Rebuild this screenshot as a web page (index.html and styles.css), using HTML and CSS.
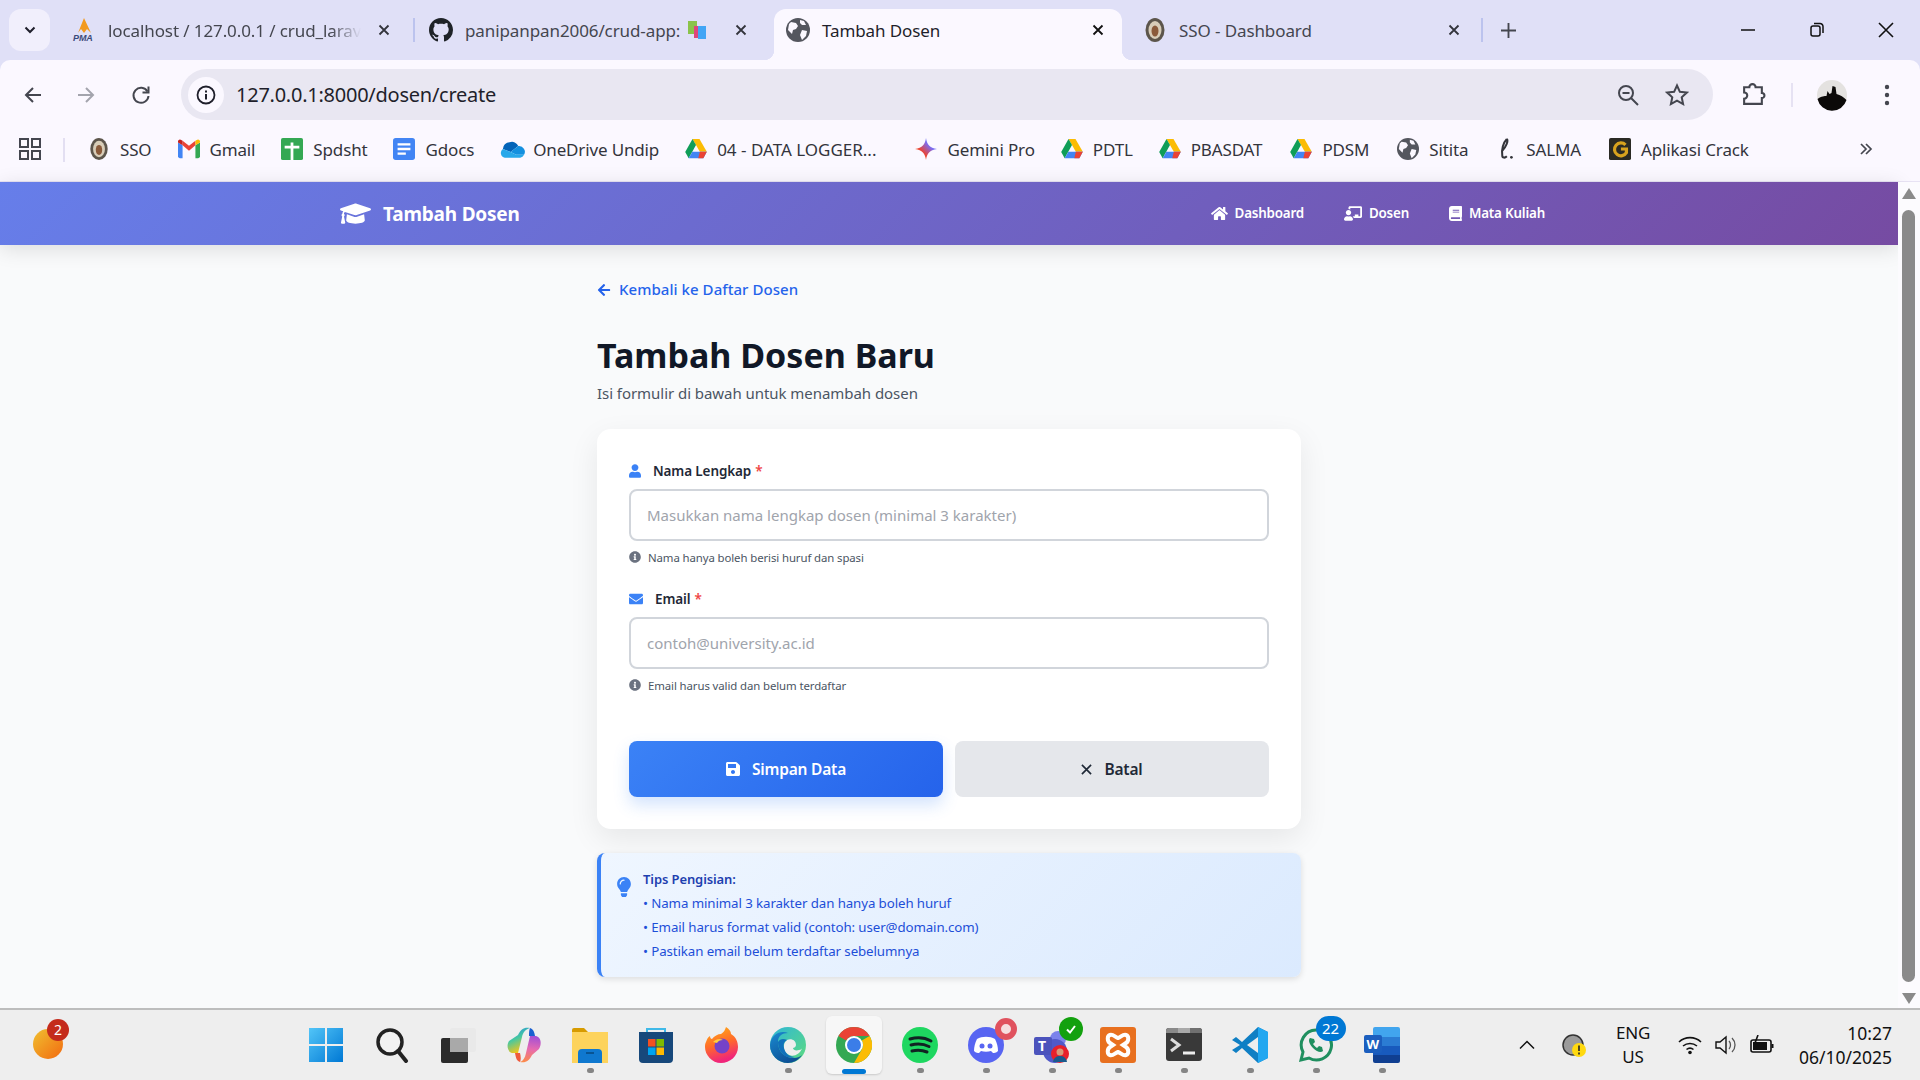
FILE: index.html
```html
<!DOCTYPE html>
<html lang="en">
<head>
    <meta charset="UTF-8">
    <meta name="viewport" content="width=device-width, initial-scale=1.0">
    <title>Tambah Dosen</title>
    <link rel="stylesheet" href="styles.css">
</head>
<body>
    <svg class="defs" width="0" height="0">
        <symbol id="drive" viewBox="0 0 24 22">
            <path d="M8.2 0h7.6l8 14h-7.6z" fill="#fbbc04"/>
            <path d="M8.2 0l3.8 6.7L4 21 .2 14.3z" fill="#0f9d58"/>
            <path d="M8 14h15.8L20 21H4z" fill="#4285f4"/>
            <path d="M16.2 14h7.6L20 21h-5.5z" fill="#ea4335"/>
        </symbol>
        <symbol id="globe" viewBox="0 0 24 24">
            <circle cx="12" cy="12" r="12" fill="#54565e"/>
            <path d="M5 4l5 1 2 3-2 3-3 1-1 4-4-4 1-6zM16 12l5 1-1 5-4 4-2-5zM14 2l4 1 2 4-4 0-2-2z" fill="#fbf8ff"/>
        </symbol>
        <symbol id="seal" viewBox="0 0 24 24">
            <ellipse cx="12" cy="12" rx="9.5" ry="12" fill="#5c554b"/>
            <ellipse cx="12" cy="12" rx="6.5" ry="9" fill="#d8cdb8"/>
            <ellipse cx="12" cy="13" rx="3.5" ry="5.5" fill="#8a5a3a"/>
        </symbol>
        <symbol id="info" viewBox="0 0 512 512">
            <path fill="currentColor" d="M256 8C119.043 8 8 119.083 8 256c0 136.997 111.043 248 248 248s248-111.003 248-248C504 119.083 392.957 8 256 8zm0 110c23.196 0 42 18.804 42 42s-18.804 42-42 42-42-18.804-42-42 18.804-42 42-42zm56 254c0 6.627-5.373 12-12 12h-88c-6.627 0-12-5.373-12-12v-24c0-6.627 5.373-12 12-12h12v-64h-12c-6.627 0-12-5.373-12-12v-24c0-6.627 5.373-12 12-12h64c6.627 0 12 5.373 12 12v100h12c6.627 0 12 5.373 12 12v24z"/>
        </symbol>
        <symbol id="tabx" viewBox="0 0 12 12">
            <path d="M1.5 1.5l9 9M10.5 1.5l-9 9" stroke="currentColor" stroke-width="1.8" fill="none"/>
        </symbol>
    </svg>

    <div class="tabstrip">
        <button class="tab-search">
            <svg width="12" height="8" viewBox="0 0 12 8"><path d="M1.5 1.5L6 6l4.500-4.500" stroke="#1f1f2b" stroke-width="2" fill="none"/></svg>
        </button>
        <div class="tab">
            <svg class="fav" viewBox="0 0 24 24">
                <path d="M6 15L12 0l7 15-4-4-3 4-3-4z" fill="#f29a1f"/>
                <text x="1" y="23" class="pma">PMA</text>
            </svg>
            <span class="tab-title fade">localhost / 127.0.0.1 / crud_larav</span>
            <svg class="tab-close"><use href="#tabx"/></svg>
        </div>
        <div class="tab-sep"></div>
        <div class="tab">
            <svg class="fav" viewBox="0 0 16 16"><path fill="#1f2328" d="M8 0C3.58 0 0 3.58 0 8c0 3.54 2.29 6.53 5.47 7.59.4.07.55-.17.55-.38 0-.19-.01-.82-.01-1.49-2.01.37-2.53-.49-2.69-.94-.09-.23-.48-.94-.82-1.13-.28-.15-.68-.52-.01-.53.63-.01 1.08.58 1.23.82.72 1.21 1.87.87 2.33.66.07-.52.28-.87.51-1.07-1.78-.2-3.64-.89-3.64-3.95 0-.87.31-1.59.82-2.15-.08-.2-.36-1.02.08-2.12 0 0 .67-.21 2.2.82.64-.18 1.32-.27 2-.27s1.36.09 2 .27c1.53-1.04 2.2-.82 2.2-.82.44 1.1.16 1.92.08 2.12.51.56.82 1.27.82 2.15 0 3.07-1.87 3.75-3.65 3.95.29.25.54.73.54 1.48 0 1.07-.01 1.93-.01 2.2 0 .21.15.46.55.38A8.01 8.01 0 0 0 16 8c0-4.42-3.58-8-8-8z"/></svg>
            <span class="tab-title">panipanpan2006/crud-app:</span>
            <svg class="tab-emoji" viewBox="0 0 18 20">
                <rect x="0" y="1" width="9" height="13" fill="#8bc34a"/>
                <rect x="6" y="6" width="5" height="12" fill="#e0457b"/>
                <rect x="10" y="6" width="8" height="13" fill="#42a5f5"/>
            </svg>
            <svg class="tab-close"><use href="#tabx"/></svg>
        </div>
        <div class="tab active">
            <svg class="fav"><use href="#globe"/></svg>
            <span class="tab-title">Tambah Dosen</span>
            <svg class="tab-close"><use href="#tabx"/></svg>
        </div>
        <div class="tab tab-last">
            <svg class="fav"><use href="#seal"/></svg>
            <span class="tab-title">SSO - Dashboard</span>
            <svg class="tab-close"><use href="#tabx"/></svg>
        </div>
        <div class="tab-sep"></div>
        <svg class="new-tab" viewBox="0 0 16 16"><path d="M8 0v16M0 8h16" stroke="#44464f" stroke-width="2"/></svg>
        <div class="win-controls">
            <svg viewBox="0 0 16 16"><path d="M1 8h14" stroke="#111" stroke-width="1.5"/></svg>
            <svg viewBox="0 0 16 16"><rect x="2" y="4" width="9" height="10" rx="2" fill="none" stroke="#111" stroke-width="1.5"/><path d="M5 1.5h6a3 3 0 0 1 3 3V11" fill="none" stroke="#111" stroke-width="1.5"/></svg>
            <svg viewBox="0 0 16 16"><path d="M1 1l14 14M15 1L1 15" stroke="#111" stroke-width="1.6"/></svg>
        </div>
    </div>

    <div class="toolbar">
        <div class="nav-btns">
            <svg viewBox="0 0 20 20"><path d="M18 10H3M10 3l-7 7 7 7" fill="none" stroke="#44464f" stroke-width="2"/></svg>
            <svg viewBox="0 0 20 20"><path d="M2 10h15M10 3l7 7-7 7" fill="none" stroke="#a3a4ad" stroke-width="2"/></svg>
            <svg class="reload" viewBox="0 0 20 20"><path d="M16.5 6.5A7.5 7.5 0 1 0 17.5 11" fill="none" stroke="#44464f" stroke-width="2"/><path d="M17.5 1.5v6h-6" fill="none" stroke="#44464f" stroke-width="2"/></svg>
        </div>
        <div class="omnibox">
            <span class="site-info">
                <svg width="20" height="20" viewBox="0 0 20 20"><circle cx="10" cy="10" r="8.5" fill="none" stroke="#1f1f2b" stroke-width="1.8"/><path d="M10 9v5.500M10 5.500v2" stroke="#1f1f2b" stroke-width="2"/></svg>
            </span>
            <span class="url">127.0.0.1:8000/dosen/create</span>
            <svg class="omni-icon" viewBox="0 0 24 24"><circle cx="10" cy="10" r="7" fill="none" stroke="#44464f" stroke-width="2"/><path d="M15 15l7 7M6.500 10h7" stroke="#44464f" stroke-width="2"/></svg>
            <svg class="omni-icon star" viewBox="0 0 24 24"><path d="M12 2.500l2.900 6.300 6.900.8-5.100 4.700 1.400 6.800-6.100-3.400-6.100 3.400 1.400-6.800L2.200 9.600l6.900-.8z" fill="none" stroke="#44464f" stroke-width="2"/></svg>
        </div>
        <svg class="ext" viewBox="0 0 24 24"><path d="M3 5h5a3 3 0 0 1 6 0h6v5.500a2.500 2.500 0 0 1 0 5V21H3v-5a3 3 0 0 0 0-6z" fill="none" stroke="#44464f" stroke-width="2"/></svg>
        <div class="tool-sep"></div>
        <svg class="avatar" viewBox="0 0 32 32">
            <circle cx="16" cy="16" r="15" fill="#e4e2e0"/>
            <path d="M1.500 20c4-3 7-3 9-3l1-5 2 3 2-1 1-7 3 1 1 7c4 1 7 3 10 6a15 15 0 0 1-29-1z" fill="#0b0908"/>
        </svg>
        <svg class="kebab" viewBox="0 0 6 24"><circle cx="3" cy="4" r="2.200" fill="#44464f"/><circle cx="3" cy="12" r="2.200" fill="#44464f"/><circle cx="3" cy="20" r="2.200" fill="#44464f"/></svg>
    </div>

    <div class="bookmarks">
        <svg class="apps" viewBox="0 0 22 22"><g fill="none" stroke="#44464f" stroke-width="2"><rect x="1" y="1" width="8" height="8"/><rect x="13" y="1" width="8" height="8"/><rect x="1" y="13" width="8" height="8"/><rect x="13" y="13" width="8" height="8"/></g></svg>
        <div class="bm-sep"></div>
        <div class="bm">
            <svg class="bm-icon"><use href="#seal"/></svg>SSO
        </div>
        <div class="bm">
            <svg class="bm-icon" viewBox="0 0 24 20"><path d="M0 3l5 3v14H2a2 2 0 0 1-2-2z" fill="#4285f4"/><path d="M24 3l-5 3v14h3a2 2 0 0 0 2-2z" fill="#34a853"/><path d="M5 6l7 6 7-6V1l-7 5.500L5 1z" fill="#ea4335"/><path d="M0 3l5 3V1L3 0a2 2 0 0 0-3 2z" fill="#c5221f"/><path d="M24 3l-5 3V1l2-1a2 2 0 0 1 3 2z" fill="#fbbc04"/></svg>Gmail
        </div>
        <div class="bm">
            <svg class="bm-icon" viewBox="0 0 24 24"><rect width="24" height="24" rx="2" fill="#34a853"/><path d="M12 5v19M4 10h16" stroke="#fff" stroke-width="3"/></svg>Spdsht
        </div>
        <div class="bm">
            <svg class="bm-icon" viewBox="0 0 24 24"><rect x="0" width="24" height="24" rx="3" fill="#4285f4"/><path d="M5 7h14M5 12h14M5 17h9" stroke="#fff" stroke-width="2.500"/></svg>Gdocs
        </div>
        <div class="bm">
            <svg class="bm-icon wide" viewBox="0 0 26 18"><path d="M10 2a7 7 0 0 1 9 4l-8 6-8-3a7 7 0 0 1 7-7z" fill="#0364b8"/><path d="M19 6a6 6 0 0 1 6 9l-8 0-6-3z" fill="#1490df"/><path d="M3 9l8 3 6 3 8 0a5 5 0 0 1-4 3H5a5 5 0 0 1-2-9z" fill="#28a8ea"/></svg>OneDrive Undip
        </div>
        <div class="bm bm-data">
            <svg class="bm-icon"><use href="#drive"/></svg>04 - DATA LOGGER...
        </div>
        <div class="bm">
            <svg class="bm-icon" viewBox="0 0 24 24">
                <defs><linearGradient id="gem" x1="0" y1="1" x2="1" y2="0"><stop offset="0" stop-color="#f9a825"/><stop offset=".35" stop-color="#ea4335"/><stop offset=".65" stop-color="#7c6cf0"/><stop offset="1" stop-color="#4285f4"/></linearGradient></defs>
                <path d="M12 0c1 7 4 11 12 12-8 1-11 5-12 12-1-7-4-11-12-12 8-1 11-5 12-12z" fill="url(#gem)"/>
            </svg>Gemini Pro
        </div>
        <div class="bm">
            <svg class="bm-icon"><use href="#drive"/></svg>PDTL
        </div>
        <div class="bm bm-gap">
            <svg class="bm-icon"><use href="#drive"/></svg>PBASDAT
        </div>
        <div class="bm bm-gap">
            <svg class="bm-icon"><use href="#drive"/></svg>PDSM
        </div>
        <div class="bm">
            <svg class="bm-icon"><use href="#globe"/></svg>Sitita
        </div>
        <div class="bm bm-gap">
            <svg class="bm-icon" viewBox="0 0 24 24"><path d="M14 1c-4 4-6 12-5 18 0 3 3 3 5 1M14 1c2 2-1 9-5 13" fill="none" stroke="#33343a" stroke-width="2.200"/><circle cx="19" cy="21" r="1.500" fill="#33343a"/></svg>SALMA
        </div>
        <div class="bm">
            <svg class="bm-icon" viewBox="0 0 24 24"><rect width="24" height="24" rx="2" fill="#2a2a24"/><path d="M18 7.500A7 7 0 1 0 19 16v-4h-6" fill="none" stroke="#d7a21e" stroke-width="3.500"/></svg>Aplikasi Crack
        </div>
        <svg class="bm-more" viewBox="0 0 14 14"><path d="M2 2l5 5-5 5M7 2l5 5-5 5" fill="none" stroke="#44464f" stroke-width="1.700"/></svg>
    </div>

    <div class="viewport">
        <div class="page">
            <nav class="topnav">
                <div class="topnav-inner">
                    <div class="brand">
                        <svg class="brand-icon" viewBox="0 55 640 400" preserveAspectRatio="none"><path fill="currentColor" d="M622.34 153.2L343.4 67.5c-15.2-4.67-31.6-4.67-46.79 0L17.66 153.2c-23.54 7.23-23.54 38.36 0 45.59l48.63 14.94c-10.67 13.19-17.23 29.28-17.88 46.9C38.78 266.15 32 276.11 32 288c0 10.78 5.68 19.85 13.86 25.65L20.33 428.53C18.11 438.52 25.71 448 35.94 448h56.11c10.24 0 17.84-9.48 15.62-19.47L82.14 313.65C90.32 307.85 96 298.78 96 288c0-11.57-6.47-21.25-15.66-26.87.76-15.02 8.44-28.3 20.69-36.72L296.6 284.5c9.06 2.78 26.44 6.25 46.79 0l278.95-85.7c23.55-7.24 23.55-38.36 0-45.6zM352.79 315.09c-28.53 8.76-52.84 3.92-65.59 0l-145.02-44.55L128 384c0 35.35 85.96 64 192 64s192-28.65 192-64l-14.18-113.47-145.03 44.56z"/></svg>
                        <span>Tambah Dosen</span>
                    </div>
                    <div class="nav-links">
                        <a class="nav-link">
                            <svg viewBox="0 0 576 512" width="17" height="15"><path fill="currentColor" d="M280.37 148.26L96 300.11V464a16 16 0 0 0 16 16l112.06-.29a16 16 0 0 0 15.92-16V368a16 16 0 0 1 16-16h64a16 16 0 0 1 16 16v95.64a16 16 0 0 0 16 16.05L464 480a16 16 0 0 0 16-16V300L295.67 148.26a12.19 12.19 0 0 0-15.3 0zM571.6 251.47L488 182.56V44.05a12 12 0 0 0-12-12h-56a12 12 0 0 0-12 12v72.61L318.47 43a48 48 0 0 0-61 0L4.34 251.47a12 12 0 0 0-1.6 16.9l25.5 31A12 12 0 0 0 45.15 301l235.22-193.74a12.19 12.19 0 0 1 15.3 0L530.9 301a12 12 0 0 0 16.9-1.6l25.5-31a12 12 0 0 0-1.7-16.93z"/></svg>
                            <span>Dashboard</span>
                        </a>
                        <a class="nav-link">
                            <svg viewBox="0 0 640 512" width="18" height="15"><path fill="currentColor" d="M208 352c-2.39 0-4.78.35-7.06 1.09C187.98 357.3 174.35 360 160 360c-14.35 0-27.98-2.7-40.95-6.91-2.28-.74-4.66-1.09-7.05-1.09C49.94 352-.33 402.48 0 464.62.14 490.88 21.73 512 48 512h224c26.27 0 47.86-21.12 48-47.38.33-62.14-49.94-112.62-112-112.62zm-48-32c53.02 0 96-42.98 96-96s-42.98-96-96-96-96 42.98-96 96 42.98 96 96 96zM592 0H208c-26.47 0-48 22.25-48 49.59V96c23.42 0 45.1 6.78 64 17.8V64h352v288h-64v-64H384v64h-76.24c19.1 16.69 33.12 38.73 39.69 64H592c26.47 0 48-22.25 48-49.59V49.59C640 22.25 618.47 0 592 0z"/></svg>
                            <span>Dosen</span>
                        </a>
                        <a class="nav-link">
                            <svg viewBox="0 0 448 512" width="13" height="15"><path fill="currentColor" d="M448 360V24c0-13.3-10.7-24-24-24H96C43 0 0 43 0 96v320c0 53 43 96 96 96h328c13.3 0 24-10.7 24-24v-16c0-7.5-3.5-14.3-8.9-18.7-4.2-15.4-4.2-59.3 0-74.7 5.4-4.3 8.9-11.1 8.9-18.6zM128 134c0-3.3 2.7-6 6-6h212c3.3 0 6 2.7 6 6v20c0 3.3-2.7 6-6 6H134c-3.3 0-6-2.7-6-6v-20zm0 64c0-3.3 2.7-6 6-6h212c3.3 0 6 2.7 6 6v20c0 3.3-2.7 6-6 6H134c-3.3 0-6-2.7-6-6v-20zm253.4 250H96c-17.7 0-32-14.3-32-32 0-17.6 14.4-32 32-32h285.4c-1.9 17.1-1.9 46.9 0 64z"/></svg>
                            <span>Mata Kuliah</span>
                        </a>
                    </div>
                </div>
            </nav>

            <main class="content">
                <a class="back-link">
                    <svg viewBox="0 0 448 512" width="14" height="14"><path fill="currentColor" d="M257.5 445.1l-22.2 22.2c-9.4 9.4-24.6 9.4-33.9 0L7 273c-9.4-9.4-9.4-24.6 0-33.9L201.4 44.7c9.4-9.4 24.6-9.4 33.9 0l22.2 22.2c9.5 9.5 9.3 25-.4 34.3L136.6 216H424c13.3 0 24 10.7 24 24v32c0 13.3-10.7 24-24 24H136.6l120.5 114.8c9.8 9.3 10 24.8.4 34.3z"/></svg>
                    <span>Kembali ke Daftar Dosen</span>
                </a>
                <h1 class="page-title">Tambah Dosen Baru</h1>
                <p class="page-sub">Isi formulir di bawah untuk menambah dosen</p>

                <form class="card">
                    <div class="field">
                        <label class="field-label">
                            <svg viewBox="0 0 448 512" width="12" height="14"><path fill="currentColor" d="M224 256c70.7 0 128-57.3 128-128S294.7 0 224 0 96 57.3 96 128s57.3 128 128 128zm89.6 32h-16.7c-22.2 10.2-46.9 16-72.9 16s-50.6-5.8-72.9-16h-16.7C60.2 288 0 348.2 0 422.4V464c0 26.5 21.5 48 48 48h352c26.5 0 48-21.5 48-48v-41.6c0-74.2-60.2-134.4-134.4-134.4z"/></svg>
                            Nama Lengkap <span class="req">*</span>
                        </label>
                        <input class="text-input" type="text" placeholder="Masukkan nama lengkap dosen (minimal 3 karakter)">
                        <p class="hint"><svg width="12" height="12"><use href="#info"/></svg>Nama hanya boleh berisi huruf dan spasi</p>
                    </div>
                    <div class="field">
                        <label class="field-label">
                            <svg viewBox="0 0 512 512" width="14" height="14"><path fill="currentColor" d="M502.3 190.8c3.9-3.1 9.7-.2 9.7 4.7V400c0 26.5-21.5 48-48 48H48c-26.5 0-48-21.5-48-48V195.6c0-5 5.7-7.8 9.7-4.7 22.4 17.4 52.1 39.5 154.1 113.6 21.1 15.4 56.7 47.8 92.2 47.6 35.7.3 72-32.8 92.3-47.6 102-74.1 131.6-96.3 154-113.7zM256 320c23.2.4 56.6-29.2 73.4-41.4 132.7-96.3 142.8-104.7 173.4-128.7 5.8-4.5 9.2-11.5 9.2-18.9v-19c0-26.5-21.5-48-48-48H48C21.5 64 0 85.5 0 112v19c0 7.4 3.4 14.3 9.2 18.9 30.6 23.9 40.7 32.4 173.4 128.7 16.8 12.2 50.2 41.8 73.4 41.4z"/></svg>
                            Email <span class="req">*</span>
                        </label>
                        <input class="text-input" type="text" placeholder="contoh@university.ac.id">
                        <p class="hint"><svg width="12" height="12"><use href="#info"/></svg>Email harus valid dan belum terdaftar</p>
                    </div>
                    <div class="actions">
                        <button type="button" class="btn btn-primary">
                            <svg viewBox="0 0 448 512" width="14" height="16"><path fill="currentColor" d="M433.941 129.941l-83.882-83.882A48 48 0 0 0 316.118 32H48C21.49 32 0 53.49 0 80v352c0 26.51 21.49 48 48 48h352c26.51 0 48-21.49 48-48V163.882a48 48 0 0 0-14.059-33.941zM224 416c-35.346 0-64-28.654-64-64 0-35.346 28.654-64 64-64s64 28.654 64 64c0 35.346-28.654 64-64 64zm96-304.52V212c0 6.627-5.373 12-12 12H76c-6.627 0-12-5.373-12-12V108c0-6.627 5.373-12 12-12h228.52c3.183 0 6.235 1.264 8.485 3.515l3.48 3.48A11.996 11.996 0 0 1 320 111.48z"/></svg>
                            Simpan Data
                        </button>
                        <button type="button" class="btn btn-cancel">
                            <svg viewBox="0 0 12 12" width="11" height="11"><path d="M1 1l10 10M11 1L1 11" stroke="currentColor" stroke-width="1.8" fill="none"/></svg>
                            Batal
                        </button>
                    </div>
                </form>

                <div class="tips">
                    <svg class="tips-icon" viewBox="0 0 352 512"><path fill="currentColor" d="M96.06 454.35c.01 6.29 1.87 12.45 5.36 17.69l17.09 25.69a31.99 31.99 0 0 0 26.64 14.28h61.71a31.99 31.99 0 0 0 26.64-14.28l17.09-25.69a31.989 31.989 0 0 0 5.36-17.69l.04-38.35H96.01l.05 38.35zM0 176c0 44.37 16.45 84.85 43.56 115.78 16.52 18.85 42.36 58.23 52.21 91.45.04.26.07.52.11.78h160.24c.04-.26.07-.51.11-.78 9.85-33.22 35.69-72.6 52.21-91.45C335.55 260.85 352 220.37 352 176 352 78.61 272.91-.3 175.45 0 73.44.31 0 82.97 0 176zm176-80c-44.11 0-80 35.89-80 80 0 8.84-7.16 16-16 16s-16-7.16-16-16c0-61.76 50.24-112 112-112 8.84 0 16 7.16 16 16s-7.16 16-16 16z"/></svg>
                    <div class="tips-text">
                        <p class="tips-title">Tips Pengisian:</p>
                        <p>• Nama minimal 3 karakter dan hanya boleh huruf</p>
                        <p>• Email harus format valid (contoh: user@domain.com)</p>
                        <p>• Pastikan email belum terdaftar sebelumnya</p>
                    </div>
                </div>
            </main>
        </div>
        <div class="scrollbar">
            <div class="sb-arrow up"></div>
            <div class="sb-thumb"></div>
            <div class="sb-arrow down"></div>
        </div>
    </div>

    <footer class="taskbar">
        <div class="tb-left">
            <div class="widget">
                <span class="widget-badge">2</span>
            </div>
        </div>
        <div class="tb-apps">
            <div class="app">
                <svg viewBox="0 0 36 36">
                    <defs><linearGradient id="win" x1="0" y1="0" x2="1" y2="1"><stop offset="0" stop-color="#52c5f8"/><stop offset="1" stop-color="#0078d4"/></linearGradient></defs>
                    <path d="M1 1h16v16H1zM19 1h16v16H19zM1 19h16v16H1zM19 19h16v16H19z" fill="url(#win)"/>
                </svg>
            </div>
            <div class="app">
                <svg viewBox="0 0 36 36"><circle cx="16" cy="15" r="12" fill="#f2f2f2" stroke="#222" stroke-width="3.5"/><path d="M24 24l8 10" stroke="#222" stroke-width="4" stroke-linecap="round"/></svg>
            </div>
            <div class="app">
                <svg viewBox="0 0 36 36"><rect x="1" y="11" width="27" height="25" rx="2" fill="#2b2b2b"/><rect x="10" y="1" width="26" height="24" rx="2" fill="#e9e9e9"/><rect x="10" y="11" width="18" height="14" fill="#a9a9a9"/></svg>
            </div>
            <div class="app">
                <svg viewBox="0 0 36 36">
                    <defs>
                        <linearGradient id="cop1" x1="0" y1="0" x2=".4" y2="1"><stop offset="0" stop-color="#1b87e8"/><stop offset=".5" stop-color="#47c8a0"/><stop offset="1" stop-color="#f5c518"/></linearGradient>
                        <linearGradient id="cop2" x1=".6" y1="0" x2=".5" y2="1"><stop offset="0" stop-color="#a24fd6"/><stop offset=".5" stop-color="#e66ab0"/><stop offset="1" stop-color="#fb8a4c"/></linearGradient>
                    </defs>
                    <path d="M24 1c-6-1-9 1-12 7L3 14c-3 5-1 11 3 12h6l4-16c1-5 4-8 8-9z" fill="url(#cop1)"/>
                    <path d="M14 35c6 1 9-1 12-7l7-6c3-5 2-12-3-13h-6l-4 17c-1 5-3 8-6 9z" fill="url(#cop2)"/>
                    <path d="M24 1c3 1 4 3 5 8h-6c0-3 0-6 1-8z" fill="#1a5fd0"/>
                    <path d="M14 35c-3-1-4-3-5-9h5c1 4 1 7 0 9z" fill="#ef5a3c"/>
                </svg>
            </div>
            <div class="app running">
                <svg viewBox="0 0 36 36">
                    <path d="M0 3a2 2 0 0 1 2-2h10l4 4h20v4H0z" fill="#d79b00"/>
                    <rect x="0" y="5" width="36" height="31" fill="#fdd35c"/>
                    <path d="M6 36V26a4 4 0 0 1 4-4h16a4 4 0 0 1 4 4v10z" fill="#0f78cf"/>
                    <path d="M14 26h8" stroke="#07497f" stroke-width="1.5"/>
                </svg>
            </div>
            <div class="app">
                <svg viewBox="0 0 36 36">
                    <path d="M9 7V2h18v5" fill="none" stroke="#3fb9e8" stroke-width="2"/>
                    <path d="M1 5h34v27a4 4 0 0 1-4 4H5a4 4 0 0 1-4-4z" fill="#17487b"/>
                    <rect x="10" y="12" width="7.5" height="7.5" fill="#f25022"/><rect x="18.5" y="12" width="7.5" height="7.5" fill="#7fba00"/>
                    <rect x="10" y="20.5" width="7.5" height="7.5" fill="#00a4ef"/><rect x="18.5" y="20.5" width="7.5" height="7.5" fill="#ffb900"/>
                </svg>
            </div>
            <div class="app">
                <svg viewBox="0 0 36 36">
                    <defs><linearGradient id="ff" x1="0" y1="0" x2=".3" y2="1"><stop offset="0" stop-color="#ffb415"/><stop offset=".55" stop-color="#ff6a2a"/><stop offset="1" stop-color="#f0257a"/></linearGradient></defs>
                    <path d="M2 15c1-3 2-5 4-6 0 2 1 3 2 3 2-3 6-5 9-5 3-2 4-4 5-7 3 2 5 4 5 7 5 3 7 8 7 13 0 9-8 16-17 16S1 28 1 20c0-2 0-3 1-5z" fill="url(#ff)"/>
                    <circle cx="18" cy="19" r="7.5" fill="#7542c8"/>
                    <path d="M9 15c3-3 7-4 10-2-3 0-5 1-6 3z" fill="#ffce3d"/>
                </svg>
            </div>
            <div class="app running">
                <svg viewBox="0 0 36 36">
                    <defs>
                        <linearGradient id="edge1" x1="0" y1="0" x2="1" y2="1"><stop offset="0" stop-color="#2fb6d8"/><stop offset="1" stop-color="#5edc7d"/></linearGradient>
                        <linearGradient id="edge2" x1="0" y1="0" x2=".6" y2="1"><stop offset="0" stop-color="#1a8ad0"/><stop offset="1" stop-color="#0c4f95"/></linearGradient>
                    </defs>
                    <circle cx="18" cy="18" r="18" fill="url(#edge1)"/>
                    <path d="M0 18C1 7 11 3 18 6c-6 0-10 3-10 9 0 10 7 16 16 16 3 0 6-1 8-3-3 5-9 8-14 8C8 36 0 28 0 18z" fill="url(#edge2)"/>
                    <path d="M17 13c4-2 9 0 9 5 0 2-2 3-3 3 0 2 3 3 6 2 1 0 2-.5 3-1.5-2 5-7 8-11 7-5-1-8-6-7-10 0-2 1-4 3-5.5z" fill="#eee"/>
                    <path d="M8 15c2-3 5-4 9-2-3 2-4 4-3 8 1 5 5 9 11 9-9 3-17-5-17-15z" fill="#1070bb"/>
                </svg>
            </div>
            <div class="app active">
                <svg viewBox="0 0 36 36">
                    <circle cx="18" cy="18" r="18" fill="#34a853"/>
                    <path d="M18 0a18 18 0 0 1 15.6 9H18a9 9 0 0 0-7.8 4.5L2.4 9A18 18 0 0 1 18 0z" fill="#ea4335"/>
                    <path d="M33.6 9A18 18 0 0 1 18 36l7.8-13.5A9 9 0 0 0 25.8 13.5z" fill="#fbbc04"/>
                    <circle cx="18" cy="18" r="9" fill="#fff"/>
                    <circle cx="18" cy="18" r="7" fill="#3b7de8"/>
                </svg>
            </div>
            <div class="app running">
                <svg viewBox="0 0 36 36"><circle cx="18" cy="18" r="18" fill="#1ed760"/><path d="M8 12c7-2 14-2 21 2M9 18c6-1.500 12-1.500 18 1.500M10 24c5-1 10-1 15 1" fill="none" stroke="#122" stroke-width="3" stroke-linecap="round"/></svg>
            </div>
            <div class="app running">
                <svg viewBox="0 0 36 36"><circle cx="18" cy="18" r="18" fill="#5865f2"/><path d="M9 12c5-3 13-3 18 0 2 4 3 8 3 12-2 2-4 2-5 2l-2-2c-3 1-7 1-10 0l-2 2c-1 0-3 0-5-2 0-4 1-8 3-12z" fill="#fff"/><circle cx="14" cy="19" r="2.5" fill="#5865f2"/><circle cx="22" cy="19" r="2.5" fill="#5865f2"/></svg>
                <span class="app-dot-rec"></span>
            </div>
            <div class="app running">
                <svg viewBox="0 0 36 36">
                    <circle cx="24" cy="12" r="8" fill="#7b83eb"/><circle cx="21" cy="24" r="12" fill="#5059c9"/>
                    <rect x="0" y="10" width="18" height="18" rx="2" fill="#4b53bc"/>
                    <text x="4" y="24" class="teams-t">T</text>
                    <circle cx="26" cy="27" r="9" fill="#e8212b"/>
                    <circle cx="26" cy="25" r="3.5" fill="#d99a78"/>
                    <path d="M19 35c1-5 4-6 7-6s6 1 7 6z" fill="#1a5a8c"/>
                </svg>
                <span class="app-check">
                    <svg viewBox="0 0 12 12" width="12" height="12"><path d="M2 6.500l3 3 5-6.500" fill="none" stroke="#fff" stroke-width="2"/></svg>
                </span>
            </div>
            <div class="app running">
                <svg viewBox="0 0 36 36"><rect width="36" height="36" rx="3" fill="#e8701f"/><path d="M10 8c3-1 5 2 8 3 3-1 5-4 8-3 3 1 3 6 0 8l-3 2 3 2c3 2 3 7 0 8-3 1-5-2-8-3-3 1-5 4-8 3-3-1-3-6 0-8l3-2-3-2c-3-2-3-7 0-8z" fill="none" stroke="#fff" stroke-width="4"/></svg>
            </div>
            <div class="app running">
                <svg viewBox="0 0 36 36"><rect y="1" width="36" height="33" rx="3" fill="#393939"/><path d="M0 4a3 3 0 0 1 3-3h10v5H0z" fill="#8a8a8a"/><rect x="12" y="1" width="12" height="5" fill="#a9a9a9"/><path d="M24 1h9a3 3 0 0 1 3 3v2H24z" fill="#707070"/><path d="M5 12l8 6-8 6" fill="none" stroke="#ddd" stroke-width="3"/><path d="M17 26h12" stroke="#eee" stroke-width="3"/></svg>
            </div>
            <div class="app running">
                <svg viewBox="0 0 36 36"><path d="M26 0l10 5v26l-10 5L10 21l-6 5-4-3 8-5-8-5 4-3 6 5z" fill="#0f7fc4"/><path d="M26 0l10 5v26l-10 5z" fill="#22a7f0"/><path d="M26 10L15 18l11 8z" fill="#eee"/></svg>
            </div>
            <div class="app running">
                <svg viewBox="0 0 36 36"><path d="M18 3a15 15 0 1 1-7 28l-8 2 2-8A15 15 0 0 1 18 3z" fill="none" stroke="#1f8f5f" stroke-width="3"/><path d="M12 11c-2 2-1 6 3 10s8 5 10 3l-1-4-3-1-2 2c-2-1-3-3-4-4l2-2-1-3z" fill="#1f8f5f"/></svg>
                <span class="app-count">22</span>
            </div>
            <div class="app running">
                <svg viewBox="0 0 36 36"><path d="M9 2a2 2 0 0 1 2-2h23a2 2 0 0 1 2 2v8H9z" fill="#41a5ee"/><rect x="9" y="10" width="27" height="9" fill="#2b7cd3"/><rect x="9" y="19" width="27" height="9" fill="#185abd"/><path d="M9 28h27v6a2 2 0 0 1-2 2H11a2 2 0 0 1-2-2z" fill="#103f91"/><rect y="8" width="18" height="18" rx="2" fill="#1b5ebe"/><text x="2.5" y="22" class="word-w">W</text></svg>
            </div>
        </div>
        <div class="tray">
            <svg class="tray-chevron" viewBox="0 0 16 10"><path d="M1 8.5l7-7 7 7" fill="none" stroke="#111" stroke-width="1.5"/></svg>
            <svg class="tray-cloud" viewBox="0 0 26 26"><circle cx="12" cy="13" r="10" fill="#9b9b9b" stroke="#333" stroke-width="1.5"/><circle cx="18" cy="18" r="7" fill="#ffd90f"/><path d="M18 13.5v5.500M18 20.500v2" stroke="#222" stroke-width="1.6"/></svg>
            <div class="tray-lang">ENG<br>US</div>
            <svg class="tray-ico wifi" viewBox="0 0 24 20"><g fill="none" stroke="#111" stroke-width="1.6"><path d="M1 7a16 16 0 0 1 22 0"/><path d="M5 11a11 11 0 0 1 14 0"/><path d="M8.5 14.5a5.500 5.500 0 0 1 7 0"/></g><circle cx="12" cy="17.5" r="1.8" fill="#111"/></svg>
            <svg class="tray-ico speaker" viewBox="0 0 24 20"><path d="M2 7h4l6-5v16l-6-5H2z" fill="none" stroke="#111" stroke-width="1.4"/><path d="M15 6c2 2 2 6 0 8M18 3c4 4 4 10 0 14" fill="none" stroke="#555" stroke-width="1.3"/></svg>
            <svg class="tray-ico battery" viewBox="0 0 24 20"><rect x="1" y="5" width="20" height="12" rx="2" fill="none" stroke="#111" stroke-width="1.6"/><rect x="21.5" y="9" width="2" height="4" fill="#111"/><rect x="3" y="7" width="14" height="8" fill="#111"/><path d="M8 0L5 8h4l-2 6" fill="none" stroke="#111" stroke-width="1.6"/></svg>
            <div class="tray-clock">10:27<br>06/10/2025</div>
        </div>
    </footer>
</body>
</html>
```

FILE: styles.css
```css
* {
    box-sizing: border-box;
}

html, body {
    height: 100%;
}

body {
    margin: 0;
    display: flex;
    flex-direction: column;
    height: 100vh;
    overflow: hidden;
    font-family: "Noto Sans", "Open Sans", sans-serif;
    background: #e0e0f7;
}

.defs {
    position: absolute;
}

/* tab strip */
.tabstrip {
    height: 60px;
    flex: none;
    display: flex;
    align-items: flex-start;
    padding: 9px 0 0 9px;
    background: #e0e0f7;
    color: #44464f;
}

.tab-search {
    width: 41px;
    height: 42px;
    margin-right: 8px;
    border: none;
    border-radius: 12px;
    background: #f1effc;
    display: flex;
    align-items: center;
    justify-content: center;
}

.tab {
    width: 355px;
    height: 42px;
    padding: 0 23px 0 14px;
    display: flex;
    align-items: center;
    font-size: 17px;
    letter-spacing: -0.1px;
    white-space: nowrap;
}

.tab.active {
    position: relative;
    width: 348px;
    height: 51px;
    margin: 0 4px 0 4px;
    padding: 0 18px 9px 12px;
    background: #fbf8ff;
    border-radius: 12px 12px 0 0;
    color: #1f1f2b;
}

/* the little flares where the active tab meets the toolbar */
.tab.active::before,
.tab.active::after {
    content: "";
    position: absolute;
    bottom: 0;
    width: 10px;
    height: 10px;
}

.tab.active::before {
    left: -10px;
    background: radial-gradient(circle at 0 0, transparent 10px, #fbf8ff 10.5px);
}

.tab.active::after {
    right: -10px;
    background: radial-gradient(circle at 100% 0, transparent 10px, #fbf8ff 10.5px);
}

.tab-last {
    padding: 0 21px 0 17px;
}

.fav {
    width: 24px;
    height: 24px;
    flex: none;
    margin-right: 12px;
}

.pma {
    font-size: 9px;
    font-style: italic;
    font-weight: 700;
    fill: #3b4a7a;
    font-family: "Liberation Sans", sans-serif;
}

.tab-title.fade {
    -webkit-mask-image: linear-gradient(90deg, #000 88%, transparent);
    mask-image: linear-gradient(90deg, #000 88%, transparent);
}

.tab-emoji {
    width: 18px;
    height: 20px;
    margin-left: 8px;
    flex: none;
}

.tab-close {
    width: 12px;
    height: 12px;
    margin-left: auto;
    flex: none;
    color: #33343c;
}

.tab.active .tab-close {
    color: #111;
}

.tab-sep {
    width: 2px;
    height: 24px;
    margin-top: 9px;
    flex: none;
    background: #bcc3ee;
}

.new-tab {
    width: 15px;
    height: 15px;
    margin: 14px 0 0 18px;
    flex: none;
}

.win-controls {
    margin-left: auto;
    display: flex;
    gap: 53px;
    padding: 13px 26px 0 0;
}

.win-controls svg {
    width: 16px;
    height: 16px;
}

/* toolbar */
.toolbar {
    height: 69px;
    flex: none;
    display: flex;
    align-items: flex-start;
    padding-top: 9px;
    background: #fbf8ff;
    border-radius: 10px 10px 0 0;
}

.nav-btns {
    width: 181px;
    height: 51px;
    flex: none;
    padding-left: 23px;
    display: flex;
    align-items: center;
    gap: 33px;
}

.nav-btns svg {
    width: 20px;
    height: 20px;
}

.nav-btns .reload {
    margin-left: 2px;
}

.omnibox {
    width: 1532px;
    height: 51px;
    flex: none;
    display: flex;
    align-items: center;
    padding: 0 24px 0 7px;
    border-radius: 26px;
    background: #e9e7f2;
}

.site-info {
    width: 36px;
    height: 36px;
    border-radius: 50%;
    background: #fbf8ff;
    display: flex;
    align-items: center;
    justify-content: center;
}

.url {
    margin-left: 12px;
    font-size: 20px;
    letter-spacing: -0.25px;
    color: #1f1f2b;
}

.omni-icon {
    width: 24px;
    height: 24px;
    margin-left: auto;
}

.omni-icon.star {
    margin-left: 25px;
}

.ext {
    width: 25px;
    height: 25px;
    margin: 13px 0 0 28px;
    flex: none;
}

.tool-sep {
    width: 2px;
    height: 24px;
    margin: 14px 0 0 25px;
    background: #e6e2f3;
}

.avatar {
    width: 32px;
    height: 32px;
    margin: 10px 0 0 23px;
}

.kebab {
    width: 6px;
    height: 24px;
    margin: 14px 0 0 36px;
}

/* bookmarks bar */
.bookmarks {
    height: 53px;
    flex: none;
    display: flex;
    align-items: flex-start;
    padding: 9px 0 0 19px;
    background: #fbf8ff;
    border-bottom: 1px solid #e8e3f4;
    font-size: 17px;
    letter-spacing: -0.15px;
    color: #33343c;
}

.apps {
    width: 22px;
    height: 22px;
}

.bm-sep {
    width: 2px;
    height: 24px;
    margin: 0 23px 0 22px;
    background: #e3dff2;
}

.bm {
    display: flex;
    align-items: center;
    height: 22px;
    margin-right: 26px;
    white-space: nowrap;
}

.bm-data {
    margin-right: 39px;
    letter-spacing: 0;
}

.bm-gap {
    margin-right: 28px;
}

.bm-icon {
    width: 22px;
    height: 22px;
    margin-right: 10px;
    flex: none;
}

.bm-icon.wide {
    width: 25px;
    margin-right: 8px;
}

.bm-more {
    width: 14px;
    height: 14px;
    margin: 4px 47px 0 auto;
}

/* page */
.viewport {
    flex: 1;
    min-height: 0;
    display: flex;
}

.page {
    flex: 1;
    min-width: 0;
    background: #f9fafb;
}

.topnav {
    height: 63px;
    background: linear-gradient(135deg, #667eea 0%, #764ba2 100%);
    box-shadow: 0 4px 20px rgba(0, 0, 0, 0.12);
    color: #fff;
}

.topnav-inner {
    width: 1280px;
    height: 100%;
    margin: 0 auto;
    padding: 0 32px 0 31px;
    display: flex;
    align-items: center;
    justify-content: space-between;
}

.brand {
    display: flex;
    align-items: center;
    gap: 12px;
    font-size: 19px;
    font-weight: 700;
    letter-spacing: -0.2px;
}

.brand-icon {
    width: 31px;
    height: 21px;
}

.nav-links {
    display: flex;
    gap: 16px;
}

.nav-link {
    display: flex;
    align-items: center;
    gap: 7px;
    padding: 8px 12px;
    font-size: 13.4px;
    font-weight: 600;
    letter-spacing: -0.2px;
}

.nav-link span {
    margin-bottom: 2px;
}

.content {
    width: 768px;
    margin: 0 auto;
    padding: 35px 32px 0;
}

.back-link {
    display: flex;
    align-items: center;
    gap: 8px;
    height: 20px;
    font-size: 15px;
    font-weight: 500;
    letter-spacing: 0.05px;
    color: #2563eb;
}

.back-link span {
    margin-bottom: 2px;
}

.page-title {
    margin: 33px 0 0;
    font-size: 34px;
    line-height: 44px;
    font-weight: 700;
    color: #111827;
}

.page-sub {
    margin: 5px 0 0;
    line-height: 22px;
    font-size: 15px;
    letter-spacing: -0.05px;
    color: #4b5563;
}

.card {
    margin-top: 25px;
    padding: 32px;
    border-radius: 14px;
    background: #fff;
    box-shadow: 0 10px 30px rgba(0, 0, 0, 0.08);
}

.field {
    margin-bottom: 24px;
}

.field-label {
    display: flex;
    align-items: center;
    height: 20px;
    margin-bottom: 8px;
    font-size: 13.5px;
    font-weight: 600;
    letter-spacing: -0.12px;
    color: #1f2937;
}

.field-label svg {
    margin-right: 12px;
    color: #3b82f6;
}

.req {
    margin-left: 4px;
    color: #ef4444;
}

.text-input {
    display: block;
    width: 100%;
    height: 52px;
    padding: 0 16px;
    border: 2px solid #d1d5db;
    border-radius: 8px;
    background: #fff;
    font-family: inherit;
    font-size: 15px;
    outline: none;
}

.text-input::placeholder {
    color: #a0a4ac;
    opacity: 1;
}

.hint {
    display: flex;
    align-items: center;
    height: 16px;
    margin: 8px 0 0;
    font-size: 11.4px;
    letter-spacing: -0.1px;
    color: #4b5563;
}

.hint svg {
    margin-right: 7px;
    color: #6b7280;
}

.actions {
    display: flex;
    gap: 12px;
    padding-top: 24px;
}

.btn {
    flex: 1;
    height: 56px;
    border: none;
    border-radius: 8px;
    display: flex;
    align-items: center;
    justify-content: center;
    gap: 12px;
    font-family: inherit;
    font-size: 15.5px;
    font-weight: 600;
    letter-spacing: -0.2px;
}

.btn-primary {
    background: linear-gradient(135deg, #3b82f6 0%, #2563eb 100%);
    box-shadow: 0 8px 16px rgba(59, 130, 246, 0.22);
    color: #fff;
}

.btn-cancel {
    background: #e5e7eb;
    color: #1f2937;
}

.tips {
    display: flex;
    gap: 12px;
    height: 124px;
    margin-top: 24px;
    padding: 14px 20px 14px 16px;
    border-left: 4px solid #3b82f6;
    border-radius: 8px;
    background: linear-gradient(135deg, #eff6ff 0%, #dbeafe 100%);
    box-shadow: 0 2px 6px rgba(0, 0, 0, 0.12);
    font-size: 13.3px;
    line-height: 24px;
    letter-spacing: -0.1px;
    color: #1d4ed8;
}

.tips-icon {
    width: 14px;
    height: 20px;
    margin-top: 10px;
    color: #3b82f6;
    flex: none;
}

.tips-text p {
    margin: 0;
}

.tips-text .tips-title {
    font-size: 13px;
    font-weight: 600;
    color: #1e40af;
}

/* scrollbar */
.scrollbar {
    width: 22px;
    flex: none;
    display: flex;
    flex-direction: column;
    align-items: center;
    background: #fcfbfe;
    padding: 6px 1px 4px 0;
}

.sb-arrow {
    width: 0;
    height: 0;
    flex: none;
    border-left: 7px solid transparent;
    border-right: 7px solid transparent;
}

.sb-arrow.up {
    border-bottom: 11px solid #8a8a8a;
}

.sb-arrow.down {
    border-top: 11px solid #8a8a8a;
}

.sb-thumb {
    width: 13px;
    flex: 1;
    margin: 11px 0;
    border-radius: 7px;
    background: #8a8a8a;
}

/* taskbar */
.taskbar {
    height: 72px;
    flex: none;
    display: flex;
    border-top: 2px solid #bdbdbd;
    background: #eeeeee;
}

.tb-left {
    width: 292.5px;
    flex: none;
    padding: 19px 0 0 33px;
}

.widget {
    position: relative;
    width: 30px;
    height: 30px;
    border-radius: 50%;
    background: linear-gradient(135deg, #f0c030 0%, #f26a10 100%);
}

.widget-badge {
    position: absolute;
    top: -10px;
    left: 14px;
    width: 22px;
    height: 22px;
    border-radius: 50%;
    background: #c42b1c;
    color: #fff;
    font-size: 14px;
    line-height: 22px;
    text-align: center;
}

.tb-apps {
    display: flex;
}

.app {
    position: relative;
    width: 66px;
    height: 70px;
    padding-top: 17px;
    flex: none;
    display: flex;
    justify-content: center;
}

.app > svg {
    width: 36px;
    height: 36px;
}

.app.running::after {
    content: "";
    position: absolute;
    left: 30px;
    bottom: 7px;
    width: 7px;
    height: 5px;
    border-radius: 3px;
    background: #858585;
}

.app.active::before {
    content: "";
    position: absolute;
    left: 5px;
    right: 5px;
    top: 6px;
    bottom: 6px;
    border-radius: 6px;
    background: #f7f7f7;
    box-shadow: 0 1px 2px rgba(0, 0, 0, 0.15);
}

.app.active > svg {
    position: relative;
}

.app.active::after {
    content: "";
    position: absolute;
    left: 21px;
    bottom: 6px;
    width: 24px;
    height: 5px;
    border-radius: 3px;
    background: #0078d4;
}

.teams-t {
    font-size: 14px;
    font-weight: 700;
    fill: #fff;
    font-family: "Noto Sans", sans-serif;
}

.word-w {
    font-size: 13px;
    font-weight: 700;
    fill: #fff;
    font-family: "Noto Sans", sans-serif;
}

.app-dot-rec {
    position: absolute;
    top: 8px;
    left: 42px;
    width: 22px;
    height: 22px;
    border-radius: 50%;
    border: 6px solid #e0525e;
    background: #f6dfe0;
}

.app-check {
    position: absolute;
    top: 7px;
    left: 40px;
    width: 24px;
    height: 24px;
    border-radius: 50%;
    background: #13a10e;
    display: flex;
    align-items: center;
    justify-content: center;
}

.app-count {
    position: absolute;
    top: 6px;
    left: 33px;
    width: 30px;
    height: 25px;
    border-radius: 13px;
    background: #0078d4;
    color: #fff;
    font-size: 15px;
    line-height: 25px;
    text-align: center;
}

.tray {
    margin-left: auto;
    padding-right: 28px;
    display: flex;
    align-items: center;
    color: #111;
    line-height: 24px;
}

.tray-chevron {
    width: 16px;
    height: 10px;
}

.tray-cloud {
    width: 26px;
    height: 26px;
    margin-left: 26px;
}

.tray-lang {
    width: 44px;
    margin-left: 24px;
    text-align: center;
    font-size: 17px;
    letter-spacing: -0.2px;
}

.tray-ico {
    width: 24px;
    height: 20px;
}

.wifi {
    margin-left: 23px;
}

.speaker,
.battery {
    margin-left: 12px;
}

.tray-clock {
    width: 118px;
    text-align: right;
    font-size: 17.5px;
}
```
